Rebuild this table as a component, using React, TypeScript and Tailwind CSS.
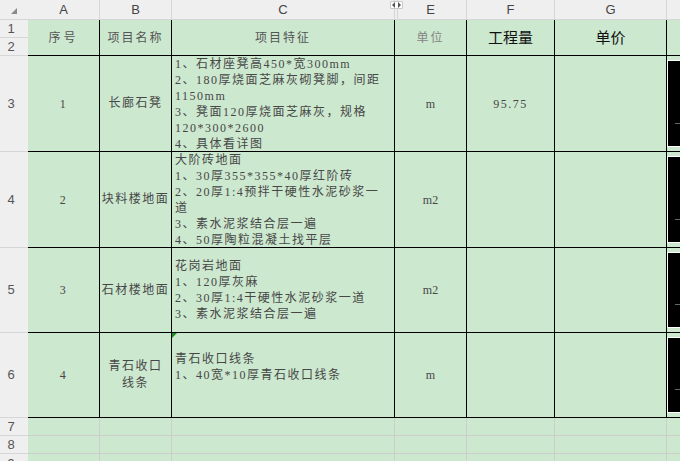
import type { ReactNode } from 'react';

const cellFont = "font-['Liberation_Serif','Noto_Sans_CJK_SC',serif] text-[12px] leading-4";
const cellText = `${cellFont} tracking-[1.5px] text-[#474747]`;

type Item = {
  no: string;
  name: string[];
  lines: string[];
  unit: string;
  qty: string;
};

const items: Item[] = [
  {
    no: '1',
    name: ['长廊石凳'],
    lines: [
      '1、石材座凳高450*宽300mm',
      '2、180厚烧面芝麻灰砌凳脚，间距',
      '1150mm',
      '3、凳面120厚烧面芝麻灰，规格',
      '120*300*2600',
      '4、具体看详图',
    ],
    unit: 'm',
    qty: '95.75',
  },
  {
    no: '2',
    name: ['块料楼地面'],
    lines: [
      '大阶砖地面',
      '1、30厚355*355*40厚红阶砖',
      '2、20厚1:4预拌干硬性水泥砂浆一',
      '道',
      '3、素水泥浆结合层一遍',
      '4、50厚陶粒混凝土找平层',
    ],
    unit: 'm2',
    qty: '',
  },
  {
    no: '3',
    name: ['石材楼地面'],
    lines: ['花岗岩地面', '1、120厚灰麻', '2、30厚1:4干硬性水泥砂浆一道', '3、素水泥浆结合层一遍'],
    unit: 'm2',
    qty: '',
  },
  {
    no: '4',
    name: ['青石收口', '线条'],
    lines: ['青石收口线条', '1、40宽*10厚青石收口线条', '\u00a0'],
    unit: 'm',
    qty: '',
  },
];

function RowHead({ children }: { children: ReactNode }) {
  return (
    <div className="flex items-center justify-center border-b border-[#d6d6d6] bg-[#efefef] pr-[6px] font-['Liberation_Sans',sans-serif] text-[13px] text-[#555]">
      {children}
    </div>
  );
}

function ColHead({ children, last, className = '' }: { children?: ReactNode; last?: boolean; className?: string }) {
  return (
    <div
      className={`flex items-center justify-center border-b border-[#d6d6d6] bg-[#efefef] font-['Liberation_Sans',sans-serif] text-[13px] text-[#444] ${last ? '' : 'border-r'} ${className}`}
    >
      {children}
    </div>
  );
}

function Cell({ children, className = '' }: { children?: ReactNode; className?: string }) {
  return (
    <div className={`relative flex items-center justify-center border-b border-r border-black bg-[#cce8cf] ${className}`}>
      {children}
    </div>
  );
}

function BlackBlock() {
  return (
    <div className="flex border-b border-black bg-[#cce8cf] py-[5px] pl-px">
      <div className="relative w-full bg-black outline outline-1 outline-white">
        <div className="absolute bottom-[22px] right-0 h-px w-[5px] bg-[#5a6e5a]" />
      </div>
    </div>
  );
}

function EmptyRow({ label }: { label: string }) {
  const cols = ['', '', '', '', '', '', ''];
  return (
    <>
      <RowHead>{label}</RowHead>
      {cols.map((_, i) => (
        <div key={i} className={`border-b border-[#cdcdcd] bg-[#cce8cf] ${i < 6 ? 'border-r' : ''}`} />
      ))}
    </>
  );
}

export default function App() {
  return (
    <div className="h-[461px] w-[680px] overflow-hidden bg-[#cce8cf]">
      <div className="grid h-full grid-cols-[28px_72px_72px_223px_72px_88px_112px_1fr] grid-rows-[20px_18px_18px_96px_96px_85px_85px_18px_18px_1fr]">
        {/* column letters */}
        <div className="flex items-center justify-center border-b border-[#d6d6d6] bg-[#efefef]">
          <svg width="6" height="6" viewBox="0 0 6 6" className="mb-[-2px]">
            <polygon points="6,0 6,6 0,6" fill="#8a8a8a" />
          </svg>
        </div>
        <ColHead>A</ColHead>
        <ColHead>B</ColHead>
        <ColHead className="relative">
          C
          {/* hidden column D */}
          <div className="absolute right-[-4px] top-0 h-[20px] w-[4px] border-l border-r border-[#d6d6d6]" />
          <div className="absolute right-[-9px] top-[1px] flex h-[8px] w-[13px] items-center justify-center rounded-[1px] border border-[#c8c8c8] bg-white">
            <svg width="9" height="6" viewBox="0 0 9 6">
              <polygon points="3,0 3,6 0,3" fill="#555" />
              <polygon points="6,0 6,6 9,3" fill="#555" />
            </svg>
          </div>
        </ColHead>
        <ColHead>E</ColHead>
        <ColHead>F</ColHead>
        <ColHead>G</ColHead>
        <ColHead last />

        {/* merged header rows 1-2 */}
        <RowHead>1</RowHead>
        <Cell className={`row-span-2 ${cellFont} tracking-[3px] text-[#555]`}>序号</Cell>
        <Cell className={`row-span-2 ${cellFont} tracking-[2px] text-[#555]`}>项目名称</Cell>
        <Cell className={`row-span-2 ${cellFont} tracking-[2px] text-[#555]`}>项目特征</Cell>
        <Cell className={`row-span-2 ${cellFont} tracking-[2px] text-[#858585]`}>单位</Cell>
        <Cell className="row-span-2 font-['Noto_Sans_CJK_SC',sans-serif] text-[15px] text-[#111]">工程量</Cell>
        <Cell className="row-span-2 font-['Noto_Sans_CJK_SC',sans-serif] text-[15px] text-[#111]">单价</Cell>
        <div className="row-span-2 border-b border-black bg-[#cce8cf]" />
        <RowHead>2</RowHead>

        {items.map((item, idx) => (
          <div key={item.no} className="contents">
            <RowHead>{idx + 3}</RowHead>
            <Cell className={cellText}>{item.no}</Cell>
            <Cell className={`${cellText} flex-col`}>
              {item.name.map((n) => (
                <span key={n} className="leading-[17px]">
                  {n}
                </span>
              ))}
            </Cell>
            <Cell className={`${cellText} justify-start pl-[3px]`}>
              {idx === 3 && (
                <svg width="5" height="5" viewBox="0 0 5 5" className="absolute left-0 top-0">
                  <polygon points="0,0 5,0 0,5" fill="#1f8f1f" />
                </svg>
              )}
              <div className="flex flex-col whitespace-nowrap">
                {item.lines.map((l, i) => (
                  <span key={i}>{l}</span>
                ))}
              </div>
            </Cell>
            <Cell className={`${cellFont} text-[#474747]`}>{item.unit}</Cell>
            <Cell className={cellText}>{item.qty}</Cell>
            <Cell />
            <BlackBlock />
          </div>
        ))}

        <EmptyRow label="7" />
        <EmptyRow label="8" />
        <EmptyRow label="9" />
      </div>
    </div>
  );
}
